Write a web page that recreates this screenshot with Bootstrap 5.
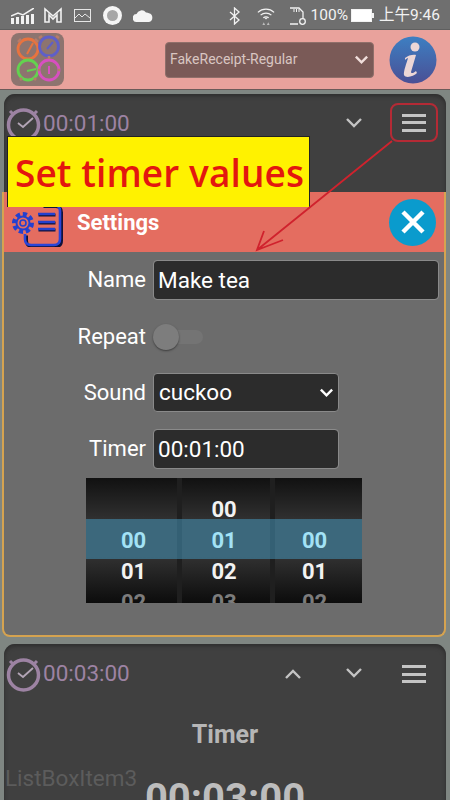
<!DOCTYPE html>
<html lang="en">
<head>
<meta charset="utf-8">
<title>Timer settings</title>
<link href="https://cdn.jsdelivr.net/npm/bootstrap@5.3.0/dist/css/bootstrap.min.css" rel="stylesheet">
<style>
html,body{width:450px;height:800px;overflow:hidden;margin:0}
body{background:#7f8682;font-family:Roboto,"Noto Sans CJK SC",sans-serif;position:relative}
.sbar{height:30px;background:#6f6f6f;color:#f2f2f2;padding:2px 10px 0 11px;font-size:15.5px;border-bottom:1px solid #5f5f5f}
.sbar svg{display:block;flex:none}
.gap-m{margin-left:9px}.gap-p{margin-left:11px}.gap-c{margin-left:12px}.gap-w{margin-left:16px}.gap-s{margin-left:14px}.gap-t{margin-left:5px}.gap-b{margin-left:3px}
.apphead{height:60px;background:#e9a29c;padding:0 13px 0 11px;border-bottom:1px solid #6b5b59}
.font-pick{width:209px;height:36px;margin-left:auto;margin-right:15px;background-color:#7a5a57;border:1px solid #8f6f6a;color:#d9c6c2;font-size:14px;padding:0 0 0 4px;border-radius:4px;background-image:url("data:image/svg+xml,%3Csvg xmlns='http://www.w3.org/2000/svg' viewBox='0 0 16 16'%3E%3Cpath fill='none' stroke='%23f0dedb' stroke-width='2.6' d='M2 5l6 6 6-6'/%3E%3C/svg%3E");background-size:15px 15px;background-position:right 4px center;box-shadow:none}
.stack{padding:4px 4px 0 4px;height:710px;overflow:hidden}
.tcard{background:#404040;border-radius:11px;box-shadow:inset 0 2px 4px #2c2c2c;color:#b9b9b9}
.tcard.first{height:540px;margin-bottom:10px}
.tcard.second{height:170px}
.trow{height:60px;padding:0 0 0 2px}
.ttime{font-size:22.5px;color:#9d83a3;margin-left:1px}
.tact{width:61px;display:flex;justify-content:center;margin-top:-3px}
.tact.up{margin-top:0}
.menu-ring{width:48px;height:39px;border:2px solid #b42a35;border-radius:8px;margin:-3px 8px 0 6px;display:flex;align-items:center;justify-content:center}
.menu-plain{width:48px;margin:0 8px 0 6px;display:flex;justify-content:center}
.bars{width:24px;height:18px;display:flex;flex-direction:column;justify-content:space-between}
.bars i{display:block;height:3px;background:#c4c4c4}
.tname{font-weight:700;font-size:25px;color:#b6b6b6;padding-top:16px;line-height:30px}
.tbig{font-weight:700;font-size:40px;color:#bdbdbd;line-height:46px;padding-top:26px}
.ghost{position:absolute;left:5px;top:765px;font-size:22.5px;color:#5c5c5c;line-height:26px}
.callout{position:absolute;left:7px;top:136px;width:303px;height:71px;background:#fff200;border:1px solid #222;border-bottom:0;color:#e3170f;font-family:"Open Sans",sans-serif;font-size:37px;font-weight:600;line-height:72px;padding-left:7px;white-space:nowrap;z-index:3;letter-spacing:.1px}
.sheet{position:absolute;left:2px;top:192px;width:444px;height:445px;background:#6c6c6c;border:2px solid #d5a350;border-top:0;border-radius:0 0 8px 8px;z-index:2;overflow:hidden}
.sheet-head{height:60px;background:#e46d60;margin:0 -2px;padding:0 10px 0 10px}
.sheet-title{font-weight:700;font-size:22px;color:#fff;margin-left:14px}
.closebtn{width:47px;height:47px;border-radius:50%;background:#0a9bcd;border:0;padding:0;margin-left:auto;display:flex;align-items:center;justify-content:center}
.sheet-body{padding:8px 0 0 0}
.frow{display:flex;align-items:center;gap:7px}
.flabel{width:142px;text-align:right;color:#fff;font-size:22px;line-height:1}
.finput{background-color:#2c2c2c;border:1px solid #8a8a8a;border-radius:4px;color:#fff;font-size:22.5px;height:40px;padding:0 0 0 4px;box-shadow:none}
.finput:focus{background-color:#2c2c2c;color:#fff;border-color:#8a8a8a;box-shadow:none}
.wide{width:286px}
.mid{width:186px}
.fsel{height:39px;padding-left:5px;background-image:url("data:image/svg+xml,%3Csvg xmlns='http://www.w3.org/2000/svg' viewBox='0 0 16 16'%3E%3Cpath fill='none' stroke='%23fff' stroke-width='2.6' d='M2 5l6 6 6-6'/%3E%3C/svg%3E");background-size:15px 15px;background-position:right 4px center}
.r-name{margin-bottom:18px}
.r-rep{height:38px;margin-bottom:17px}
.r-snd{margin-bottom:17px}
.r-tim{margin-bottom:9px;height:40px}
.toggle{width:50px;height:26px;position:relative}
.toggle b{position:absolute;left:12px;right:0;top:6px;height:14px;border-radius:7px;background:#747474}
.toggle u{position:absolute;left:0;top:0;width:26px;height:26px;border-radius:50%;background:#7d7d7d;box-shadow:0 1px 2px #3d3d3d}
.wheel{width:276px;height:125px;margin-left:82px;background:#000;position:relative;overflow:hidden;display:flex}
.wcol{height:100%;background:linear-gradient(#111 0,#323232 35%,#323232 62%,#0c0c0c 100%);text-align:center;font-weight:700;font-size:22px;line-height:31px;color:#f2f2f2;padding-top:16px}
.wcol.c1{width:91px;padding-left:4px}
.wcol.c2{width:98px;border-left:5px solid #1f1f1f;border-right:5px solid #1f1f1f;padding-right:4px}
.wcol.c3{width:87px;padding-right:8px}
.wcol span{display:block;height:31px;position:relative;z-index:1}
.wcol .sel{color:#a3e2f6}
.wcol .dim{color:#7c7c7c}
.wband{position:absolute;left:0;right:0;top:41px;height:40px;background:rgba(70,150,185,.55)}
.pointer{position:absolute;left:0;top:0;z-index:4;pointer-events:none}
</style>
</head>
<body>
<div class="sbar d-flex align-items-center">
  <svg width="23" height="16" viewBox="0 0 23 16"><g fill="#f2f2f2"><rect x="0" y="10" width="3" height="6"/><rect x="5" y="9" width="3" height="7"/><rect x="10" y="8" width="3" height="8"/><rect x="15" y="7" width="3" height="9"/><rect x="20" y="6" width="3" height="10"/></g><path d="M0 8l7-3 5 2 11-7" fill="none" stroke="#f2f2f2" stroke-width="1.5"/></svg>
  <svg class="gap-m" width="20" height="17" viewBox="0 0 20 17"><path d="M2 15V2l8 7 8-7v13h-4V8l-4 4-4-4v7z" fill="none" stroke="#f2f2f2" stroke-width="1.6"/></svg>
  <svg class="gap-p" width="17" height="13" viewBox="0 0 17 13"><rect x=".5" y=".5" width="16" height="12" fill="none" stroke="#e5e5e5"/><path d="M1 9l4-4 3 3 3-3 5 4" fill="none" stroke="#e5e5e5"/></svg>
  <svg class="gap-c" width="19" height="19" viewBox="0 0 19 19"><circle cx="9.5" cy="9.5" r="9.5" fill="#f5f5f5"/><circle cx="9.5" cy="9.5" r="5.5" fill="#a6a6a6"/></svg>
  <svg class="gap-p" width="20" height="12" viewBox="0 0 20 12"><path d="M4 12a4 4 0 0 1-.5-8A5.5 5.5 0 0 1 13 2.500a4.700 4.700 0 0 1 3 .8A4.500 4.500 0 0 1 16 12z" fill="#f5f5f5"/></svg>
  <svg class="ms-auto" width="12" height="18" viewBox="0 0 12 18"><path d="M1 5l9 8-4.500 4V1L10 5l-9 8" fill="none" stroke="#f2f2f2" stroke-width="1.300"/></svg>
  <svg class="gap-w" width="18" height="20" viewBox="0 0 20 20"><g fill="none" stroke="#f2f2f2" stroke-width="1.400"><path d="M1 6a13 13 0 0 1 18 0"/><path d="M4 9a9 9 0 0 1 12 0"/><path d="M7 12a5 5 0 0 1 6 0"/></g><path d="M10 14l-2-2h4z" fill="#f2f2f2"/><path d="M6 20l1.500-3L9 20zM11 20l1.500-3 1.500 3z" fill="#bdbdbd"/></svg>
  <svg class="gap-s" width="17" height="18" viewBox="0 0 17 18"><path d="M1 1h9l4 4v7M9 17H1z" fill="none" stroke="#f2f2f2" stroke-width="1.300"/><path d="M5 2v3M7.500 2v3M10 2v3" stroke="#f2f2f2"/><circle cx="13.500" cy="14.500" r="2.800" fill="none" stroke="#f2f2f2" stroke-width="1.300"/></svg>
  <span class="gap-t">100%</span>
  <svg class="gap-b" width="23" height="13" viewBox="0 0 23 13"><rect x=".5" y=".5" width="20" height="12" fill="#fff" stroke="#f2f2f2"/><rect x="21" y="4" width="2" height="5" fill="#f2f2f2"/></svg>
  <span class="gap-t">上午9:46</span>
</div>

<header class="apphead d-flex align-items-center">
  <svg width="53" height="53" viewBox="0 0 53 53"><rect width="53" height="53" rx="8" fill="#8d746f"/>
    <g fill="none" stroke-width="2.800"><circle cx="17" cy="16" r="10" stroke="#e8733f"/><circle cx="38" cy="13.500" r="9.500" stroke="#5f5fc8"/><circle cx="17" cy="37" r="10" stroke="#63d24f"/><circle cx="38" cy="37" r="10" stroke="#d84fc0"/></g>
    <path d="M16 21l6-11" stroke="#e8733f" stroke-width="2"/><path d="M36 16l6-7" stroke="#5f5fc8" stroke-width="2"/><path d="M16 38l9-2" stroke="#63d24f" stroke-width="2"/><path d="M38 33v8" stroke="#d84fc0" stroke-width="2"/>
    <path d="M10 6l-3 3M24 6l3 3M31 3l-3 2M45 3l3 2M9 47l2-2M25 47l-2-2M38 26v-3M49 37h-2M27 37h2" stroke-width="2.500" stroke="#b77c6a"/></svg>
  <select class="form-select font-pick" aria-label="Font"><option>FakeReceipt-Regular</option></select>
  <svg width="48" height="48" viewBox="0 0 48 48"><defs><linearGradient id="ig" x1="0" y1="0" x2="0" y2="1"><stop offset="0" stop-color="#3d7fc2"/><stop offset="1" stop-color="#4a4f95"/></linearGradient></defs><circle cx="24" cy="24" r="23.500" fill="url(#ig)"/><circle cx="26" cy="11" r="4.500" fill="#ecd6d6"/><path d="M16 22c3-3 9-4 11-3l-5 17c0 2 3 1 5-1l1 2c-3 3-11 6-13 2-1-3 3-13 4-17-1 0-2 1-3 2z" fill="#ecd6d6"/></svg>
</header>

<main class="stack">
  <section class="tcard first">
    <div class="trow d-flex align-items-center">
      <svg width="36" height="36" viewBox="0 0 36 36"><g fill="none" stroke="#9d83a3"><circle cx="17.500" cy="19" r="15" stroke-width="3.500"/><path d="M4 5l3 3M31 5l-3 3" stroke-width="3"/></g><path d="M12 17l5 4 10-9" fill="none" stroke="#b3a5b6" stroke-width="1.800"/></svg>
      <span class="ttime">00:01:00</span>
      <span class="ms-auto tact"><svg width="16" height="10" viewBox="0 0 16 10"><path d="M1 1l7 7 7-7" fill="none" stroke="#c4c4c4" stroke-width="2.400"/></svg></span>
      <span class="menu-ring"><span class="bars"><i></i><i></i><i></i></span></span>
    </div>
  </section>
  <section class="tcard second">
    <div class="trow d-flex align-items-center">
      <svg width="36" height="36" viewBox="0 0 36 36"><g fill="none" stroke="#9d83a3"><circle cx="17.500" cy="19" r="15" stroke-width="3.500"/><path d="M4 5l3 3M31 5l-3 3" stroke-width="3"/></g><path d="M12 17l5 4 10-9" fill="none" stroke="#b3a5b6" stroke-width="1.800"/></svg>
      <span class="ttime">00:03:00</span>
      <span class="ms-auto tact up"><svg width="16" height="10" viewBox="0 0 16 10"><path d="M1 9l7-7 7 7" fill="none" stroke="#c4c4c4" stroke-width="2.400"/></svg></span>
      <span class="tact"><svg width="16" height="10" viewBox="0 0 16 10"><path d="M1 1l7 7 7-7" fill="none" stroke="#c4c4c4" stroke-width="2.400"/></svg></span>
      <span class="menu-plain"><span class="bars"><i></i><i></i><i></i></span></span>
    </div>
    <div class="tname text-center">Timer</div>
    <div class="tbig text-center">00:03:00</div>
  </section>
</main>
<div class="ghost">ListBoxItem3</div>

<div class="callout">Set timer values</div>

<section class="sheet">
  <div class="sheet-head d-flex align-items-center">
    <svg width="51" height="50" viewBox="0 0 51 50"><g fill="none"><path d="M30 8H42q6 0 6 6V42q0 6-6 6H19q-6 0-6-6V37" stroke="#10123a" stroke-width="3" transform="translate(1.500 1.500)"/><path d="M30 8H42q6 0 6 6V42q0 6-6 6H19q-6 0-6-6V37" stroke="#2a45d8" stroke-width="2.600"/><circle cx="11" cy="26" r="8.500" stroke="#2440d0" stroke-width="5" stroke-dasharray="4 2.600"/><circle cx="11" cy="26" r="6.500" stroke="#2440d0" stroke-width="2"/><circle cx="11" cy="26" r="3" stroke="#2440d0" stroke-width="1.600"/><path d="M26 17h17M26 25h17M26 32h17" stroke="#10123a" stroke-width="3" transform="translate(.5 1)"/><path d="M26 17h17M26 25h17M26 32h17" stroke="#2440d0" stroke-width="2.400"/></g></svg>
    <span class="sheet-title">Settings</span>
    <button class="closebtn" type="button" aria-label="Close"><svg width="24" height="24" viewBox="0 0 24 24"><path d="M2 2l20 20M22 2L2 22" stroke="#fff" stroke-width="4.500"/></svg></button>
  </div>
  <div class="sheet-body">
    <div class="frow r-name"><label class="flabel" for="nm">Name</label><input id="nm" class="form-control finput wide" value="Make tea"></div>
    <div class="frow r-rep"><span class="flabel">Repeat</span><span class="toggle"><b></b><u></u></span></div>
    <div class="frow r-snd"><label class="flabel" for="sd">Sound</label><select id="sd" class="form-select finput fsel mid"><option>cuckoo</option></select></div>
    <div class="frow r-tim"><label class="flabel" for="tm">Timer</label><input id="tm" class="form-control finput mid" value="00:01:00"></div>
    <div class="wheel">
      <div class="wband"></div>
      <div class="wcol c1"><span>&nbsp;</span><span class="sel">00</span><span>01</span><span class="dim">02</span></div>
      <div class="wcol c2"><span>00</span><span class="sel">01</span><span>02</span><span class="dim">03</span></div>
      <div class="wcol c3"><span>&nbsp;</span><span class="sel">00</span><span>01</span><span class="dim">02</span></div>
    </div>
  </div>
</section>

<svg class="pointer" width="450" height="800" viewBox="0 0 450 800"><path d="M392 141L257 250M264 231l-7 19 26-10" fill="none" stroke="#d0222d" stroke-width="1.800"/></svg>
</body>
</html>
